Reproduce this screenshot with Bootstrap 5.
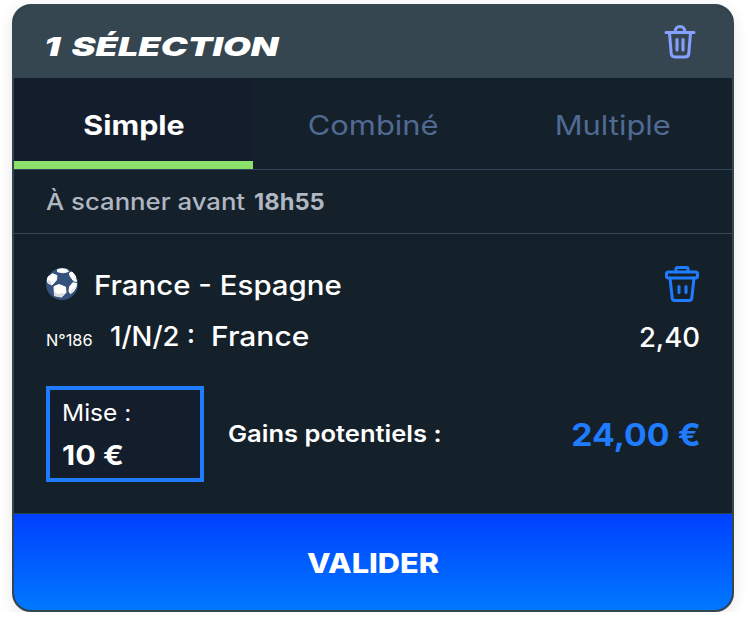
<!DOCTYPE html>
<html lang="fr">
<head>
<meta charset="utf-8">
<meta name="viewport" content="width=device-width, initial-scale=1">
<title>1 sélection</title>
<link href="https://cdn.jsdelivr.net/npm/bootstrap@5.3.0/dist/css/bootstrap.min.css" rel="stylesheet">
<style>
body{background:#fff;font-family:Inter,"Open Sans",sans-serif;color:#fff;padding:4px 12px 0;overflow:hidden}
.slip{width:722px;height:608px;border:2px solid #364651;border-radius:19px;background:#15212a;overflow:hidden;box-shadow:0 4px 16px rgba(0,0,0,.1)}
.slip-head{height:72px;background:#364651;padding:0 35px 0 30px}
.slip-title{font-size:26px;line-height:32px;font-weight:900;font-style:italic;margin:9px 0 0}
.tabs{height:92px;border-bottom:1px solid #33475c}
.tabs .nav-link{border-radius:0;padding:0;height:91px;line-height:95px;font-size:27px;color:#506a94}
.tabs .nav-link.active{background:#141d2c;color:#fff;font-weight:700;border-bottom:8px solid #8be26a}
.scan{height:64px;border-bottom:1px solid #3a4750;padding-left:32px;font-size:23px;line-height:64px;font-weight:500;color:#b0b7c3}
.bet{height:279px;padding:32px 33px 0 32px}
/* Text set in an extended width */
.t{display:inline-block;white-space:nowrap;transform-origin:left center}
.main{font-size:27.5px;line-height:36px;font-weight:550}
.match{height:36px}
.match-name{margin-left:16px;padding-top:2px}
.bin{margin-bottom:2px}
.pick{height:36px;margin-top:16px}
.num{font-size:15.4px;font-weight:400;line-height:36px;width:64px;padding-top:5px}
.stake-row{margin-top:32px}
.stake{width:158px;height:96px;border:4px solid #1f7cff;background:#141d2c;padding:6px 12px}
.stake-label{font-size:23px;line-height:34px;font-weight:400}
.stake-value{font-size:27px;line-height:52px;font-weight:700}
.gain-label{font-size:23px;font-weight:600;margin-left:24px}
.gain-value{font-size:31px;font-weight:700;color:#1f7cff;padding-top:2px;margin-right:-2px}
.odds{margin-right:-1px;padding-top:1px}
.btn-go{height:97px;border:0;border-top:1px solid #284650;border-radius:0;background:linear-gradient(#0040ff,#0078ff);color:#fff;font-size:27px;font-weight:800;padding:5px 0 0}
.btn-go .t,.tabs .t{transform-origin:center}
.to-right{transform-origin:right center}
.x-title{transform:scaleX(1.385);word-spacing:3px}
.x-simple{transform:scaleX(1.125)}
.x-tab{transform:scaleX(1.145)}
.x-scan{transform:scaleX(1.118);margin-right:30px}
.x-hour{transform:scaleX(1.03)}
.x-match{transform:scaleX(1.07)}
.x-num{transform:scaleX(1.06)}
.x-team{transform:scaleX(1.09);margin-left:16px}
.x-mise{transform:scaleX(1.065)}
.x-value{transform:scaleX(1.13)}
.x-gain{transform:scaleX(1.11)}
.x-total{transform:scaleX(1.09)}
.x-go{transform:scaleX(1.137)}
</style>
</head>
<body>
<main class="slip d-flex flex-column">
  <header class="slip-head d-flex align-items-center justify-content-between">
    <h1 class="slip-title"><span class="t x-title">1 SÉLECTION</span></h1>
    <svg width="34" height="36" viewBox="0 0 34 36" fill="none" stroke="#86a0ff" stroke-width="3" stroke-linecap="round" stroke-linejoin="round"><path d="M3 8.500h28M6.500 9l1.700 20.500q.3 3.500 3.800 3.500h10q3.500 0 3.800-3.500L27.500 9M12 8q.5-5.500 5-5.500t5 5.500M14 15.500v10.500M20 15.500v10.500"/></svg>
  </header>
  <nav class="tabs nav nav-fill row g-0">
    <a class="nav-link active col-4" href="#"><span class="t x-simple">Simple</span></a>
    <a class="nav-link col-4" href="#"><span class="t x-tab">Combiné</span></a>
    <a class="nav-link col-4" href="#"><span class="t x-tab">Multiple</span></a>
  </nav>
  <div class="scan d-flex"><span class="t x-scan">À scanner avant</span><b class="t x-hour">18h55</b></div>
  <section class="bet">
    <div class="match d-flex align-items-center main">
      <svg width="32" height="32" viewBox="0 0 32 32"><circle cx="16" cy="16" r="16" fill="#35517e"/><g fill="#fff" stroke="#fff" stroke-width="1" stroke-linejoin="round"><path d="M11.500 1.500Q16-.2 21 1.500l1.500 2-5 1.300-6-1zM2 9l4.500-3.300L11 7.500 10.500 12 6 17l-4-2q-1.500-2 0-6zM23.500 5l2.500-1q4 3 4.500 9.500l-3-.7L24 8zM8 18.500l5-2 6.500 2.500.5 5.500-4.500 4.500-7-1.500zM23.500 19l3.200-4.200 3.800.5q.3 4-2.500 7.500l-3.500 3-1.500-2.500z"/></g><path d="M1.500 12l3 1 1.500 4-4-2zM8 24l4 2 6-1-2.500 4.500-7.500-1.500zM25 23l4-4q-.5 3-4.500 7z" fill="#dadbe0"/></svg>
      <span class="t match-name x-match">France - Espagne</span>
      <svg class="bin ms-auto" width="36" height="38" viewBox="0 0 36 38" fill="none" stroke="#1f7cff" stroke-width="3" stroke-linecap="round" stroke-linejoin="round"><rect x="3.500" y="8" width="31" height="6" rx="2"/><path d="M13 8V5q0-1.500 1.500-1.500h9Q25 3.500 25 5v3M7 14l2.200 20q.3 2.500 2.500 2.500h14.600q2.200 0 2.500-2.500L31 14M16 22.500v6M23 22.500v6"/></svg>
    </div>
    <div class="pick d-flex main"><span class="num"><span class="t x-num">N°186</span></span><span class="t">1/N/2 :</span><span class="t x-team">France</span><span class="t odds ms-auto">2,40</span></div>
    <div class="stake-row d-flex align-items-center">
      <div class="stake"><div class="stake-label"><span class="t x-mise">Mise :</span></div><div class="stake-value"><span class="t x-value">10 €</span></div></div>
      <span class="gain-label t x-gain">Gains potentiels :</span><span class="gain-value t to-right x-total ms-auto">24,00 €</span>
    </div>
  </section>
  <button class="btn btn-go w-100" type="button"><span class="t x-go">VALIDER</span></button>
</main>
<script src="https://cdn.jsdelivr.net/npm/bootstrap@5.3.0/dist/js/bootstrap.bundle.min.js"></script>
</body>
</html>
